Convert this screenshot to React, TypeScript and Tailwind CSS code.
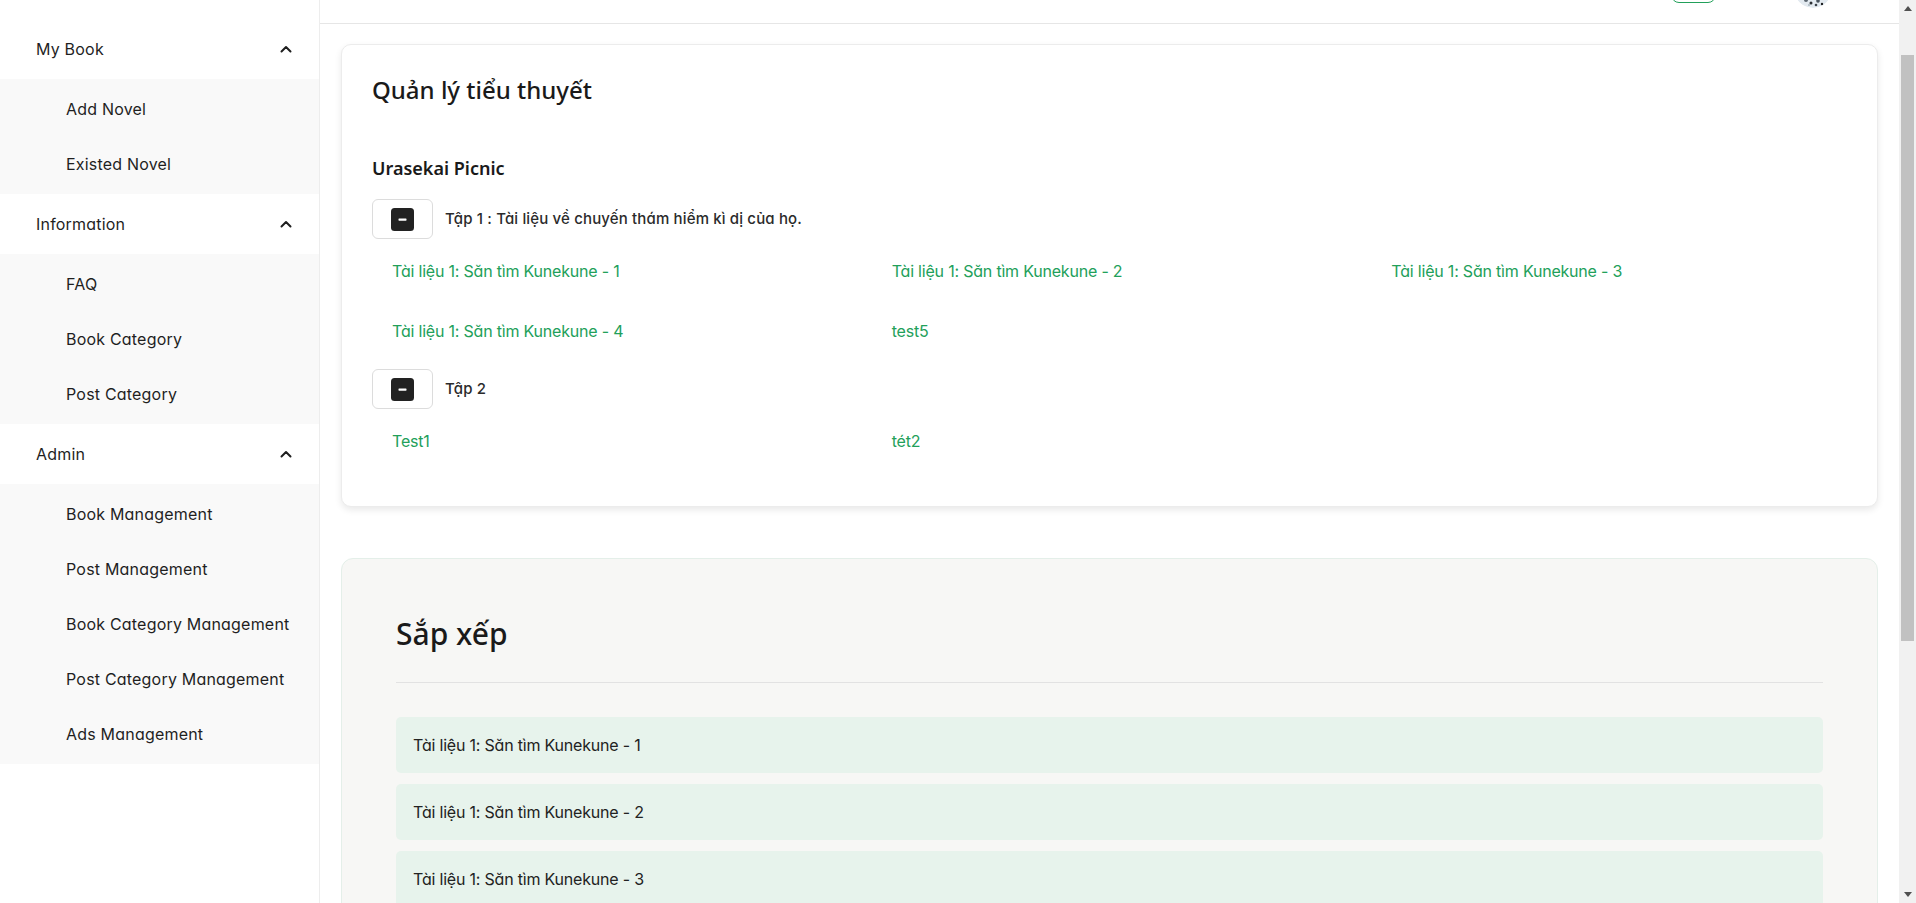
import React from "react";

const body = "font-['Inter','Noto_Sans',sans-serif] [font-feature-settings:'cv11']";
const head = "font-['Noto_Sans','Open_Sans',sans-serif]";

function Chevron() {
  return (
    <svg width="12" height="8" viewBox="0 0 12 8" className="shrink-0">
      <polyline points="1.5,6.5 6,2 10.5,6.5" fill="none" stroke="#1f1f1f" strokeWidth="2" strokeLinecap="round" strokeLinejoin="round" />
    </svg>
  );
}

const groups = [
  { title: "My Book", items: ["Add Novel", "Existed Novel"] },
  { title: "Information", items: ["FAQ", "Book Category", "Post Category"] },
  {
    title: "Admin",
    items: [
      "Book Management",
      "Post Management",
      "Book Category Management",
      "Post Category Management",
      "Ads Management",
    ],
  },
];

function Sidebar() {
  return (
    <aside className="w-[320px] shrink-0 border-r border-[#ededed] bg-white pt-[19px] text-[16px] tracking-[0.2px] text-[#1f1f1f]">
      {groups.map((g) => (
        <div key={g.title}>
          <div className="flex h-[60px] items-center justify-between pl-[36px] pr-[27px]">
            <span>{g.title}</span>
            <Chevron />
          </div>
          <div className="bg-[#f9f9f9] py-[2.5px]">
            {g.items.map((it) => (
              <div key={it} className="flex h-[55px] items-center pl-[66px]">
                {it}
              </div>
            ))}
          </div>
        </div>
      ))}
    </aside>
  );
}

function Header() {
  return (
    <header className="flex h-[24px] shrink-0 items-end justify-end overflow-hidden border-b border-[#e6e6e6] bg-white pr-[67px]">
      <div className="mb-[20px] h-[36px] w-[45px] shrink-0 rounded-[8px] border border-[#22a05a]" />
      <div className="mb-[15px] ml-[78px] h-[38px] w-[38px] shrink-0 overflow-hidden rounded-full">
        <svg width="38" height="38" viewBox="0 0 38 38">
          <circle cx="19" cy="19" r="19" fill="#e3eaf0" />
          <circle cx="12" cy="30" r="2" fill="#5b6670" />
          <circle cx="17" cy="33" r="1.5" fill="#2b2f33" />
          <circle cx="24" cy="31" r="1.8" fill="#49535c" />
          <circle cx="28" cy="34" r="1.2" fill="#1c1f22" />
          <circle cx="20" cy="28" r="1" fill="#8a96a0" />
          <circle cx="9" cy="26" r="1" fill="#9aa6b0" />
          <circle cx="30" cy="28" r="1.2" fill="#6b7780" />
          <circle cx="15" cy="35" r="1" fill="#a8b4bd" />
          <circle cx="22" cy="35" r="1.3" fill="#3a4148" />
        </svg>
      </div>
    </header>
  );
}

function MinusBox() {
  return (
    <svg width="23" height="23" viewBox="0 0 23 23">
      <rect x="0" y="0" width="23" height="23" rx="3.5" fill="#222222" />
      <rect x="7.5" y="10.5" width="8" height="2.2" rx="0.6" fill="#ffffff" />
    </svg>
  );
}

function Volume({ title, links, className }: { title: string; links: string[]; className?: string }) {
  return (
    <div className={className}>
      <div className="flex items-center">
        <button className="flex h-[40px] w-[61px] items-center justify-center rounded-[6px] border border-[#dcdcdc] bg-white">
          <MinusBox />
        </button>
        <span className="ml-[12px] text-[15px] font-medium tracking-[0.15px] text-[#2b2b2b]">{title}</span>
      </div>
      <div className="mr-[-24px] mt-[2px] grid grid-cols-3">
        {links.map((l, i) => (
          <div key={i} className="py-[18px] pl-[20px] text-[16px] leading-[24px] tracking-[-0.2px] text-[#22a05a]">
            {l}
          </div>
        ))}
      </div>
    </div>
  );
}

function Scrollbar() {
  return (
    <div className="flex w-[17px] shrink-0 flex-col bg-[#f1f1f1]">
      <div className="flex h-[17px] items-center justify-center">
        <svg width="8" height="5" viewBox="0 0 8 5">
          <polygon points="0,5 4,0 8,5" fill="#505050" />
        </svg>
      </div>
      <div className="h-[38px]" />
      <div className="mx-[2px] h-[586px] bg-[#c1c1c1]" />
      <div className="flex-1" />
      <div className="flex h-[17px] items-center justify-center">
        <svg width="8" height="5" viewBox="0 0 8 5">
          <polygon points="0,0 8,0 4,5" fill="#505050" />
        </svg>
      </div>
    </div>
  );
}

export default function App() {
  const doc = "Tài liệu 1: Săn tìm Kunekune - ";
  return (
    <div className={`flex h-[903px] w-full overflow-hidden bg-white ${body}`}>
      <Sidebar />
      <div className="flex min-w-0 flex-1 flex-col">
        <Header />
        <main className="min-h-0 flex-1 overflow-hidden px-[21px] pt-[20px]">
          <section className="rounded-[10px] border border-[#ececec] bg-white px-[30px] pb-[35px] pt-[29px] shadow-[0_3px_7px_rgba(0,0,0,0.09)]">
            <h1 className={`${head} text-[24px] font-medium leading-[32px] text-[#1a1a1a]`}>Quản lý tiểu thuyết</h1>
            <h2 className={`${head} mt-[50px] text-[18px] font-semibold leading-[24px] text-[#1a1a1a]`}>Urasekai Picnic</h2>
            <Volume
              className="mt-[19px]"
              title="Tập 1 : Tài liệu về chuyến thám hiểm kì dị của họ."
              links={[doc + "1", doc + "2", doc + "3", doc + "4", "test5"]}
            />
            <Volume className="mt-[8px]" title="Tập 2" links={["Test1", "tét2"]} />
          </section>
          <section className="mt-[51px] rounded-[12px] border border-[#e4efe9] bg-[#f7f7f5] px-[54px] pb-[40px] pt-[55px]">
            <h2 className={`${head} text-[30px] font-medium leading-[40px] text-[#1a1a1a]`}>Sắp xếp</h2>
            <div className="mt-[28px] h-px bg-[#e2e2e2]" />
            <div className="mt-[34px] flex flex-col gap-[11px]">
              {[1, 2, 3].map((n) => (
                <div key={n} className="flex h-[56px] items-center rounded-[5px] bg-[#e7f3ec] pl-[17px] text-[16px] tracking-[-0.2px] text-[#222222]">
                  {doc + n}
                </div>
              ))}
            </div>
          </section>
        </main>
      </div>
      <Scrollbar />
    </div>
  );
}
